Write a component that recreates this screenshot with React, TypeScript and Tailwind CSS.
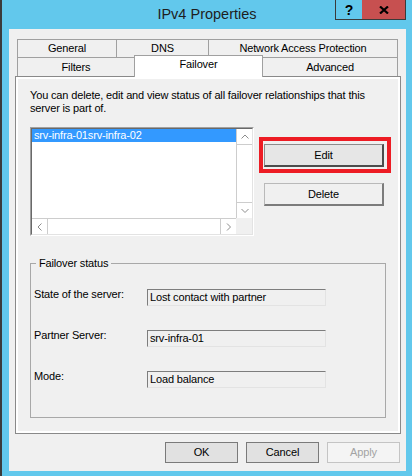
import React from "react";

function Chevron({ dir }: { dir: "up" | "down" | "left" | "right" }) {
  if (dir === "up" || dir === "down") {
    const pts = dir === "up" ? "0.5,4.5 4,1 7.5,4.5" : "0.5,1 4,4.5 7.5,1";
    return (
      <svg width="8" height="6" viewBox="0 0 8 6" className="block">
        <polyline points={pts} fill="none" stroke="#8c8c8c" strokeWidth="1" />
      </svg>
    );
  }
  const pts = dir === "left" ? "4.5,0.5 1,4 4.5,7.5" : "1,0.5 4.5,4 1,7.5";
  return (
    <svg width="6" height="8" viewBox="0 0 6 8" className="block">
      <polyline points={pts} fill="none" stroke="#8c8c8c" strokeWidth="1" />
    </svg>
  );
}

function Field({ label, value }: { label: string; value: string }) {
  return (
    <div className="flex items-start h-[18px]">
      <div className="w-[113px] leading-[13px]">{label}</div>
      <div className="mt-[1px] w-[179px] h-[17px] border-t border-l border-[#7d7d7d] border-r border-b border-r-[#e3e3e3] border-b-[#e3e3e3] bg-[#f0f0f0] pl-[2px] pt-[1px] leading-[13px] whitespace-nowrap">
        {value}
      </div>
    </div>
  );
}

export default function App() {
  return (
    <div className="w-[412px] h-[476px] bg-[#62c8ec] border-l-2 border-[#3b3b3b] flex flex-col font-['Liberation_Sans',Arial,sans-serif] text-[11px] leading-[13px] tracking-[-0.15px] text-black overflow-hidden">
      {/* Title bar */}
      <div className="grid h-[29px] shrink-0">
        <div className="col-start-1 row-start-1 text-center pt-[6px] text-[14.5px] leading-[17px] tracking-normal text-[#1e1e1e]">
          IPv4 Properties
        </div>
        <div className="col-start-1 row-start-1 flex justify-end items-start pr-[6px]">
          <div className="flex h-[20px] border-l border-b border-r border-[#3a3a3a]">
            <div className="w-[26px] flex items-center justify-center font-bold text-[14px] leading-[16px] text-black">
              ?
            </div>
            <div className="w-[43px] bg-[#c75050] flex items-center justify-center">
              <svg width="10" height="8" viewBox="0 0 10 8" className="block">
                <path d="M1 0.5 L9 7.5 M9 0.5 L1 7.5" stroke="#000" strokeWidth="2.2" fill="none" />
              </svg>
            </div>
          </div>
        </div>
      </div>

      {/* Client area */}
      <div className="ml-[7px] mr-[6px] h-[442px] shrink-0 bg-[#f0f0f0] flex flex-col pt-[10px]">
        <div className="ml-[6px] w-[386px] flex flex-col">
          {/* Tabs */}
          <div className="px-[2px] flex flex-col">
            <div className="flex h-[18px]">
              <div className="w-[99px] h-[18px] border-l border-t border-[#a0a0a0] bg-[#f0f0f0] flex items-center justify-center">General</div>
              <div className="w-[92px] h-[18px] border-l border-t border-[#a0a0a0] bg-[#f0f0f0] flex items-center justify-center">DNS</div>
              <div className="w-[190px] h-[18px] border-l border-t border-r border-[#a0a0a0] bg-[#f0f0f0] flex items-center justify-center">Network Access Protection</div>
            </div>
            <div className="flex items-start h-[19px]">
              <div className="w-[117px] h-[19px] border-l border-t border-[#a0a0a0] bg-[#f0f0f0] flex items-center justify-center">Filters</div>
              <div className="relative z-10 w-[129px] h-[22px] mt-[-2px] border-l border-t border-r border-[#a0a0a0] bg-white flex items-start justify-center pt-[2px]">Failover</div>
              <div className="w-[135px] h-[19px] border-t border-r border-[#a0a0a0] bg-[#f0f0f0] flex items-center justify-center">Advanced</div>
            </div>
          </div>

          {/* Panel */}
          <div className="h-[358px] border border-[#898989]">
            <div className="h-full border-2 border-white bg-[#f0f0f0] flex flex-col pl-[12px] pt-[10px]">
              <p className="whitespace-nowrap leading-[13px]">
                You can delete, edit and view status of all failover relationships that this
                <br />
                server is part of.
              </p>

              <div className="mt-[12px] flex items-start">
                {/* Listbox */}
                <div className="w-[224px] h-[109px] border-t border-l border-[#a0a0a0] border-r border-b border-r-white border-b-white">
                  <div className="h-full border-t border-l border-[#696969] border-r border-b border-r-[#e3e3e3] border-b-[#e3e3e3] grid grid-cols-[1fr_16px] grid-rows-[1fr_16px] bg-white">
                    <div className="overflow-hidden">
                      <div className="h-[13px] bg-[#3399ff] text-white pl-[2px] leading-[13px] whitespace-nowrap">
                        srv-infra-01srv-infra-02
                      </div>
                    </div>
                    <div className="flex flex-col border-l border-[#cdcdcd] bg-white">
                      <div className="h-[16px] border-b border-[#cdcdcd] flex items-center justify-center">
                        <Chevron dir="up" />
                      </div>
                      <div className="flex-1" />
                      <div className="h-[16px] border-t border-[#cdcdcd] flex items-center justify-center">
                        <Chevron dir="down" />
                      </div>
                    </div>
                    <div className="flex border-t border-[#cdcdcd] bg-white">
                      <div className="w-[16px] border-r border-[#cdcdcd] flex items-center justify-center">
                        <Chevron dir="left" />
                      </div>
                      <div className="flex-1" />
                      <div className="w-[16px] border-l border-[#cdcdcd] flex items-center justify-center">
                        <Chevron dir="right" />
                      </div>
                    </div>
                    <div className="bg-[#f0f0f0]" />
                  </div>
                </div>

                {/* Buttons */}
                <div className="ml-[10px] pt-[17px] flex flex-col">
                  <div className="relative w-[120px] h-[23px]">
                    <div className="w-full h-full border-t border-l border-[#8c8c8c] border-b-2 border-r-2 border-b-[#4c4c4c] border-r-[#4c4c4c] bg-[#e6e6e6] flex items-center justify-center">
                      Edit
                    </div>
                    <div className="absolute left-[-5px] top-[-7px] w-[132px] h-[36px] border-4 border-[#ed1c24] pointer-events-none" />
                  </div>
                  <div className="mt-[16px] w-[120px] h-[23px] border-t border-l border-[#b9b9b9] border-b-2 border-r-2 border-b-[#7c7c7c] border-r-[#7c7c7c] bg-[#f0f0f0] flex items-center justify-center">
                    Delete
                  </div>
                </div>
              </div>

              {/* Group box */}
              <fieldset className="mt-[21px] w-[356px] border border-[#a8a8a8] p-0 m-0 min-w-0">
                <legend className="ml-[5px] px-[3px] leading-[13px]">Failover status</legend>
                <div className="pl-[3px] pt-[18px] pb-[29px] flex flex-col gap-[23px]">
                  <Field label="State of the server:" value="Lost contact with partner" />
                  <Field label="Partner Server:" value="srv-infra-01" />
                  <Field label="Mode:" value="Load balance" />
                </div>
              </fieldset>
            </div>
          </div>
        </div>

        {/* Dialog buttons */}
        <div className="mt-[8px] flex justify-end gap-[8px] pr-[6px]">
          <div className="w-[73px] h-[21px] border border-[#7a7a7a] bg-[#e1e1e1] flex items-center justify-center">OK</div>
          <div className="w-[73px] h-[21px] border border-[#7a7a7a] bg-[#e1e1e1] flex items-center justify-center">Cancel</div>
          <div className="w-[73px] h-[21px] border border-[#c4c4c4] bg-[#f4f4f4] text-[#a3a3a3] flex items-center justify-center">Apply</div>
        </div>
      </div>
    </div>
  );
}
